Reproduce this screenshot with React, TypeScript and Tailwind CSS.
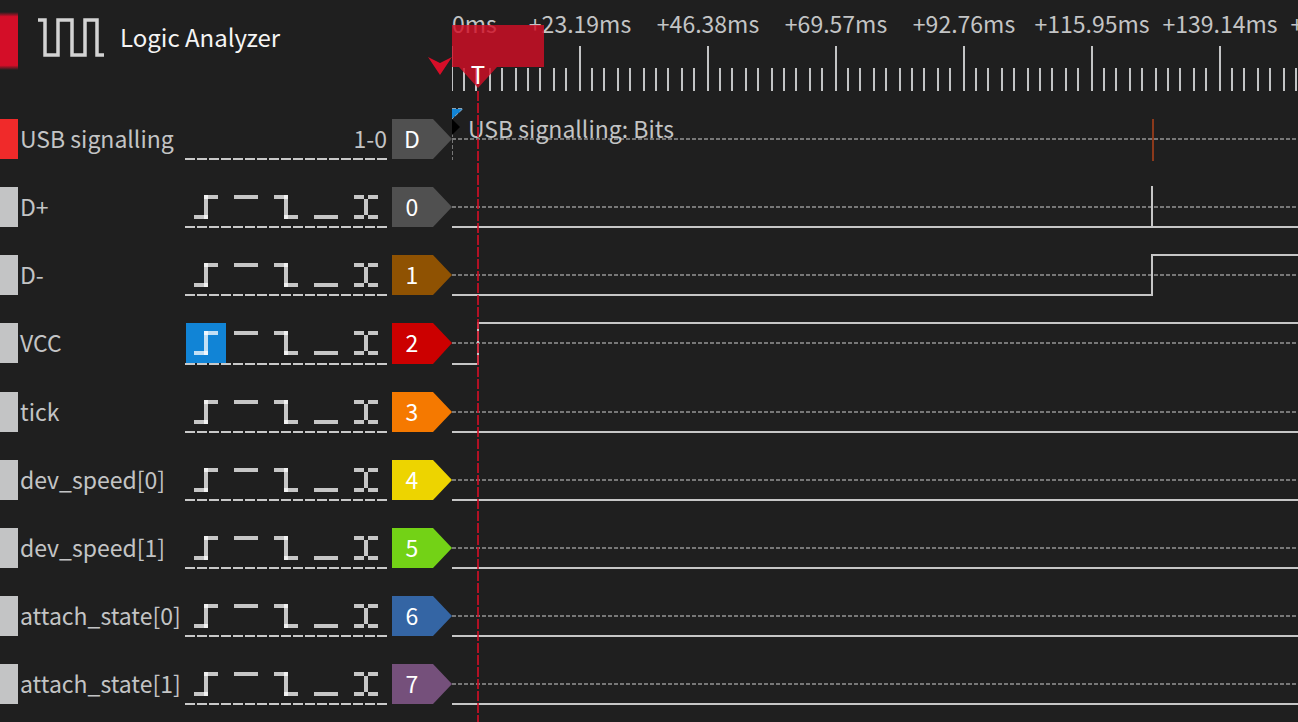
import { clsx } from "clsx";

type Trigger = "rising" | "high" | "falling" | "low" | "either";

type Channel = {
  id: string;
  name: string;
  color: string;
  // x position of a level change on the canvas, and what happens there
  event?: { x: number; kind: "pulse" | "rise" };
  trigger?: Trigger;
  tall?: boolean;
};

const triggers: Trigger[] = ["rising", "high", "falling", "low", "either"];

// Every trigger glyph is a set of bars: [x, y, width, height] on a 40px grid.
const glyphs: Record<Trigger, number[][]> = {
  rising: [[8, 28, 14, 4], [18, 8, 4, 24], [18, 8, 14, 4]],
  high: [[8, 8, 24, 4]],
  falling: [[8, 8, 14, 4], [18, 8, 4, 24], [18, 28, 14, 4]],
  low: [[8, 28, 24, 4]],
  either: [[8, 8, 10, 4], [22, 8, 10, 4], [18, 12, 4, 16], [8, 28, 10, 4], [22, 28, 10, 4]],
};

const channels: Channel[] = [
  { id: "0", name: "D+", color: "text-[#505050]", event: { x: 700, kind: "pulse" } },
  { id: "1", name: "D-", color: "text-[#8f5202]", event: { x: 700, kind: "rise" } },
  { id: "2", name: "VCC", color: "text-[#cc0000]", event: { x: 26, kind: "rise" }, trigger: "rising", tall: true },
  { id: "3", name: "tick", color: "text-[#f57900]" },
  { id: "4", name: "dev_speed[0]", color: "text-[#edd400]" },
  { id: "5", name: "dev_speed[1]", color: "text-[#73d216]" },
  { id: "6", name: "attach_state[0]", color: "text-[#3465a4]" },
  { id: "7", name: "attach_state[1]", color: "text-[#75507b]" },
];

const labels = ["+23.19ms", "+46.38ms", "+69.57ms", "+92.76ms", "+115.95ms", "+139.14ms", "+162.33ms"];
const minorTicks = [12, 24, 38, 50, 64, 76, 88, 102, 114];

export default function App() {
  return (
    <div className="flex h-screen overflow-hidden bg-[#1f1f1f] font-['Noto_Sans_CJK_JP','Liberation_Sans',sans-serif] text-[23px] leading-[38px] text-[#c3c4c5]">
      <aside className="w-[452px] shrink-0">
        <Header />
        <div className="flex h-[68px] items-start">
          <div className="h-10 w-[18px] shrink-0 bg-[#f02a2a]" />
          <div className="w-[167px] shrink-0 pl-0.5 whitespace-nowrap">USB signalling</div>
          <div className="relative h-10 w-[202px] text-right">
            1-0
            <Underline y={40} />
          </div>
          <Flag id="D" color="text-[#505050]" />
        </div>
        {channels.map((c) => (
          <ChannelRow key={c.id} channel={c} />
        ))}
      </aside>

      <main className="relative min-w-0 flex-1">
        <Ruler />
        <DecoderTrace />
        {channels.map((c) => (
          <Trace key={c.id} channel={c} />
        ))}
        <TriggerCursor />
      </main>
    </div>
  );
}

function Header() {
  return (
    <header className="flex h-[119px] items-start">
      <div className="mt-3 h-[58px] w-[18px] bg-[linear-gradient(to_bottom,#1f1f1f,#d40e28_8%,#d40e28_92%,#1f1f1f)]" />
      <svg width="68" height="40" className="mt-[18px] ml-5" fill="none" aria-hidden="true">
        <path
          d="M0 2H7V37H20V2H34V37H47V2H59V37H66"
          stroke="#d3d3d3"
          strokeWidth="3.5"
        />
      </svg>
      <h1 className="mt-[18px] ml-3.5 text-2xl leading-[38px] whitespace-nowrap text-[#f4f4f4]">Logic Analyzer</h1>
    </header>
  );
}

function ChannelRow({ channel }: { channel: Channel }) {
  return (
    <div className={clsx("flex items-start", channel.tall ? "h-[69px]" : "h-[68px]")}>
      <div className="h-10 w-[18px] shrink-0 bg-[#c3c4c5]" />
      <div className="w-[167px] shrink-0 pl-0.5 whitespace-nowrap">{channel.name}</div>
      <div className="relative flex w-[202px] pl-px">
        {triggers.map((t) => (
          <button
            key={t}
            type="button"
            aria-label={`${channel.name} trigger ${t}`}
            aria-pressed={channel.trigger === t}
            className={clsx("h-10 w-10", channel.trigger === t && "bg-[#1184d6]")}
          >
            <svg width="40" height="40" className="fill-white/75" aria-hidden="true">
              {glyphs[t].map(([x, y, w, h], i) => (
                <rect key={i} x={x} y={y} width={w} height={h} />
              ))}
            </svg>
          </button>
        ))}
        <Underline y={channel.tall ? 41 : 40} />
      </div>
      <Flag id={channel.id} color={channel.color} tall={channel.tall} />
    </div>
  );
}

function Underline({ y }: { y: number }) {
  return (
    <svg width="202" height="44" className="pointer-events-none absolute top-0 left-0" aria-hidden="true">
      <line x1="0" x2="202" y1={y} y2={y} stroke="#c9c9c9" strokeWidth="2" strokeDasharray="10 2" />
    </svg>
  );
}

function Flag({ id, color, tall }: { id: string; color: string; tall?: boolean }) {
  const h = tall ? 41 : 40;
  return (
    <div className="relative ml-[5px] h-10 w-[60px] shrink-0">
      <svg width="60" height={h} className={clsx("absolute top-0 left-0 fill-current", color)} aria-hidden="true">
        <path d={`M0 0H41L60 20L41 ${h}H0Z`} />
      </svg>
      <span className="relative block w-10 text-center text-white">{id}</span>
    </div>
  );
}

function Ruler() {
  return (
    <div className="h-[119px] overflow-hidden pt-2">
      <div className="flex leading-[30px] whitespace-nowrap">
        <span className="w-16 shrink-0">0ms</span>
        {labels.map((l) => (
          <span key={l} className="w-32 shrink-0 text-center">
            {l}
          </span>
        ))}
      </div>
      <svg className="mt-2 h-[45px] w-full" fill="#c3c4c5" aria-hidden="true">
        {["0ms", ...labels].map((l, i) => (
          <g key={l} transform={`translate(${i * 128 - 1} 0)`}>
            <rect width="2" height="45" />
            {minorTicks.map((x) => (
              <rect key={x} x={x} y="22" width="2" height="23" />
            ))}
          </g>
        ))}
      </svg>
    </div>
  );
}

function Midline() {
  return <line x1="0" x2="100%" y1="20" y2="20" stroke="#777" strokeWidth="2" strokeDasharray="4 2" />;
}

function DecoderTrace() {
  return (
    <div className="relative h-[68px]">
      <svg className="block h-11 w-full overflow-visible" aria-hidden="true">
        <Midline />
        <path d="M.5 14V41" stroke="#777" strokeDasharray="4 2" />
        <path d="M0 0L8 8L0 16Z" fill="#000" />
        <path d="M0-10H11L0 0Z" fill="#1184d6" />
        <path d="M0-10.5H11L0 0" fill="none" stroke="#8fa4b2" strokeDasharray="4 2" />
        <path d="M701 0V42" stroke="#8b391b" strokeWidth="2" />
      </svg>
      <span className="absolute top-[-10px] left-4 whitespace-nowrap">USB signalling: Bits</span>
    </div>
  );
}

function Trace({ channel }: { channel: Channel }) {
  const low = channel.tall ? 41 : 40;
  const { event } = channel;
  const rises = event?.kind === "rise";

  return (
    <div className={channel.tall ? "h-[69px]" : "h-[68px]"}>
      <svg className="block h-11 w-full overflow-visible" stroke="#c6c6c6" strokeWidth="2" aria-hidden="true">
        <Midline />
        <line x1="0" x2={rises ? event.x : "100%"} y1={low} y2={low} />
        {event && <line x1={event.x} x2={event.x} y1="-1" y2={low + 1} />}
        {rises && <line x1={event.x} x2="100%" y1="0" y2="0" />}
      </svg>
    </div>
  );
}

// Time marker, flag and dashed line drawn over the traces.
function TriggerCursor() {
  return (
    <div className="pointer-events-none absolute inset-0">
      <svg className="h-full w-full overflow-visible" aria-hidden="true">
        <path d="M-24 57L-12 63L0 57L-12 75Z" fill="#d60e28" />
        <path d="M0 25H92V67H45L26 88L7 67H0Z" fill="#d20f26" opacity="0.82" />
        <line x1="26" x2="26" y1="91" y2="100%" stroke="#d20f26" strokeOpacity="0.82" strokeWidth="2" strokeDasharray="10 2" />
      </svg>
      <span className="absolute top-[58px] left-4 w-5 text-center text-2xl leading-8 text-white">T</span>
    </div>
  );
}
